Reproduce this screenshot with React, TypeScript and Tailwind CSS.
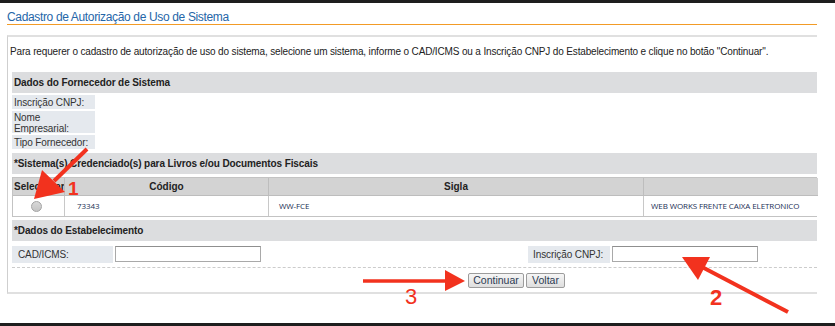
import React from "react";

const Label = ({ children, className = "" }: { children: React.ReactNode; className?: string }) => (
  <div className={`bg-[#e5e9ee] text-[#333] text-[10px] leading-[11px] tracking-[-0.1px] pl-[2px] whitespace-nowrap ${className}`}>{children}</div>
);

const head = "bg-[#dcdddf] flex items-center pl-[2px] text-[10px] font-bold text-[#222] tracking-[-0.1px] whitespace-nowrap";
const data = "text-[8px] tracking-[-0.1px] text-[#1b2f55] font-['Open_Sans',sans-serif] whitespace-nowrap";

export default function App() {
  return (
    <div className="relative w-[835px] h-[326px] bg-white overflow-hidden flex flex-col font-['Liberation_Sans',Arial,sans-serif]">
      <div className="h-[3px] bg-[#1e1e1e] shrink-0" />
      <div className="ml-[7px] w-[810px] pt-[7px] border-b border-[#f29b26] text-[12px] leading-[14px] tracking-[-0.35px] text-[#2566a8]">
        Cadastro de Autorização de Uso de Sistema
      </div>
      <div className="ml-[7px] mt-[10px] w-[810px] border-l border-l-[#cfcfcf] border-t-2 border-t-[#e0e0e0] border-b-2 border-b-[#e0e0e0] pl-[4px] pb-[4px] flex flex-col">
        <div className="pt-[8px] -ml-[2px] text-[10px] leading-[13px] tracking-[-0.15px] text-[#222] whitespace-nowrap">
          Para requerer o cadastro de autorização de uso do sistema, selecione um sistema, informe o CAD/ICMS ou a Inscrição CNPJ do Estabelecimento e clique no botão "Continuar".
        </div>
        <div className={`mt-[14px] h-[21px] ${head}`}>Dados do Fornecedor de Sistema</div>
        <div className="mt-[2px] flex flex-col gap-[2px]">
          <Label className="w-[83px] h-[14px] flex items-center">Inscrição CNPJ:</Label>
          <Label className="w-[83px] h-[22px] pt-[1px]">Nome<br />Empresarial:</Label>
          <Label className="w-[83px] h-[14px] flex items-center">Tipo Fornecedor:</Label>
        </div>
        <div className={`mt-[4px] h-[21px] ${head}`}>*Sistema(s) Credenciado(s) para Livros e/ou Documentos Fiscais</div>
        <div className="mt-[3px] grid grid-cols-[52px_204px_375px_174px] border-t border-l border-[#c3c3c3] border-b">
          <div className="h-[18px] bg-[#d3d3d3] border-r border-b border-[#bdbdbd] flex items-center pl-[1px] text-[10px] font-bold text-[#222] overflow-hidden whitespace-nowrap">Selecionar</div>
          <div className="h-[18px] bg-[#d3d3d3] border-r border-b border-[#bdbdbd] flex items-center justify-center text-[10px] font-bold text-[#222]">Código</div>
          <div className="h-[18px] bg-[#d3d3d3] border-r border-b border-[#bdbdbd] flex items-center justify-center text-[10px] font-bold text-[#222]">Sigla</div>
          <div className="h-[18px] bg-[#d3d3d3] border-b border-[#bdbdbd]" />
          <div className="h-[20px] border-r border-[#c8c8c8] flex items-center pl-[18px]">
            <div className="w-[11px] h-[11px] rounded-full border border-[#a3a3a3] bg-gradient-to-b from-[#d8d8d8] to-[#c4c4c4]" />
          </div>
          <div className={`h-[20px] border-r border-[#c8c8c8] flex items-center pl-[12px] ${data}`}>73343</div>
          <div className={`h-[20px] border-r border-[#c8c8c8] flex items-center pl-[10px] ${data}`}>WW-FCE</div>
          <div className={`h-[20px] flex items-center pl-[7px] ${data}`}>WEB WORKS FRENTE CAIXA ELETRONICO</div>
        </div>
        <div className={`mt-[3px] h-[21px] ${head}`}>*Dados do Estabelecimento</div>
        <div className="mt-[5px] flex items-start h-[17px]">
          <Label className="w-[101px] h-[17px] flex items-center pl-[6px]">CAD/ICMS:</Label>
          <div className="ml-[2px] w-[146px] h-[16px] border border-[#a9a9a9] border-t-[#8f8f8f] bg-white" />
          <div className="w-[267px]" />
          <Label className="w-[82px] h-[17px] flex items-center pl-[5px]">Inscrição CNPJ:</Label>
          <div className="ml-[2px] w-[146px] h-[16px] border border-[#a9a9a9] border-t-[#8f8f8f] bg-white" />
        </div>
        <div className="mt-[4px] border-t border-dashed border-[#cccccc]" />
        <div className="mt-[5px] flex gap-[2px] pl-[456px]">
          <button className="w-[56px] h-[15px] border border-[#9c9c9c] rounded-[2px] bg-gradient-to-b from-[#f6f6f6] to-[#dedede] text-[10.5px] leading-[13px] text-[#2b3a52]">Continuar</button>
          <button className="w-[39px] h-[15px] border border-[#9c9c9c] rounded-[2px] bg-gradient-to-b from-[#f6f6f6] to-[#dedede] text-[10.5px] leading-[13px] text-[#2b3a52]">Voltar</button>
        </div>
      </div>
      <div className="absolute left-0 right-0 bottom-0 h-[3px] bg-[#1e1e1e]" />

      <svg className="absolute inset-0 pointer-events-none" width="835" height="326">
        <line x1="87" y1="149" x2="54" y2="181" stroke="#f2321e" strokeWidth="4" />
        <polygon points="34,199 42,170 65,192" fill="#f2321e" />
        <line x1="788" y1="312" x2="702" y2="267" stroke="#f2321e" strokeWidth="4" />
        <polygon points="682,257 710,257 698,280" fill="#f2321e" />
        <line x1="363" y1="281" x2="448" y2="281" stroke="#f2321e" strokeWidth="3.5" />
        <polygon points="465,281 445,270 445,291" fill="#f2321e" />
      </svg>
      <span className="absolute left-[68px] top-[179px] text-[19px] leading-none font-bold text-[#f2321e]">1</span>
      <span className="absolute left-[710px] top-[287px] text-[22px] leading-none font-bold text-[#f2321e]">2</span>
      <span className="absolute left-[405px] top-[286px] text-[22px] leading-none text-[#f2321e]">3</span>
    </div>
  );
}
